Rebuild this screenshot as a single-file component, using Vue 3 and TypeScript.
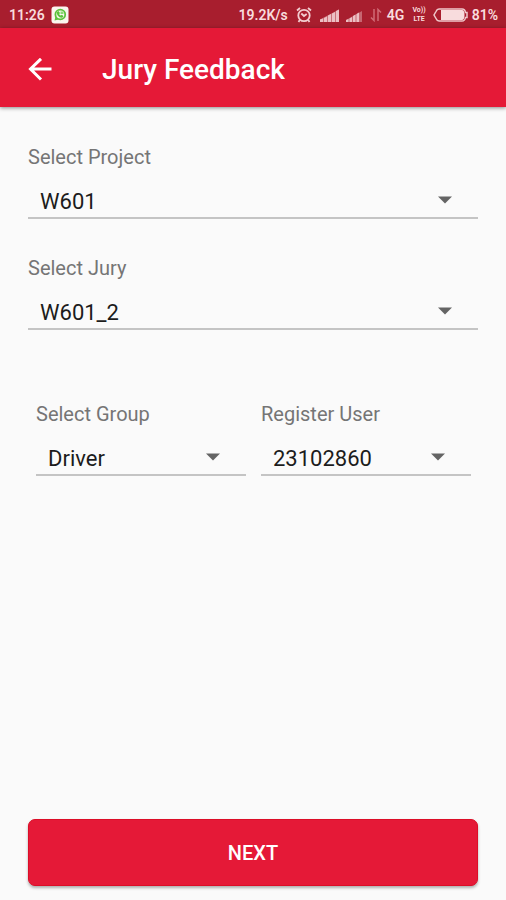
<script setup lang="ts">
import { ref } from 'vue'

interface Field {
  id: string
  label: string
  options: string[]
}

const mainFields: Field[] = [
  { id: 'project', label: 'Select Project', options: ['W601'] },
  { id: 'jury', label: 'Select Jury', options: ['W601_2'] },
]
const userFields: Field[] = [
  { id: 'group', label: 'Select Group', options: ['Driver'] },
  { id: 'user', label: 'Register User', options: ['23102860'] },
]

const values = ref<Record<string, string>>({
  project: 'W601',
  jury: 'W601_2',
  group: 'Driver',
  user: '23102860',
})
</script>

<template>
  <div class="screen">
    <div class="status">
      <span class="clock">11:26</span>
      <svg class="chat" width="18" height="18" viewBox="0 0 18 18" aria-hidden="true">
        <rect x="0.5" y="0.5" width="17" height="17" rx="3" fill="#fbf5ef" />
        <circle cx="9.300" cy="8.500" r="4.900" fill="none" stroke="#5cc23c" stroke-width="1.800" />
        <path d="M3.500 14.500l1-4 3 3z" fill="#5cc23c" />
        <path d="M6 6l1.500-1 1.500 2-.9 1.200 1.500 1.300 1.400-.7 1.500 1.400-1 1.300C8.500 12.500 5.200 9 6 6z" fill="#5cc23c" />
        <path d="M9.500 5.500h3v2.500h-3z" fill="#8ad873" />
      </svg>
      <div class="indicators">
        <span class="rate">19.2K/s</span>
        <svg class="alarm" width="16" height="18" viewBox="0 0 16 18" fill="none" stroke="#f3cdd0" stroke-width="1.800" aria-hidden="true">
          <circle cx="8" cy="9.500" r="5.700" />
          <path d="M1 4.500L4 2M15 4.500L12 2M3.800 14L2.500 16M12.200 14L13.500 16M5.300 7.500L8 10l2.700-2" />
        </svg>
        <svg class="signal" width="19" height="13" viewBox="0 0 19 13" fill="#ecbfc3" aria-hidden="true">
          <path d="M0 13V10.500L19 0.500V13z" opacity="0.500" />
          <path d="M0 13V10.500L3 9.500V13zM4 13V9L7 7.500V13zM8 13V6.500L11 5V13zM12 13V4.500L15 3V13zM16 13V2L19 0.500V13z" />
        </svg>
        <svg class="signal-small" width="16" height="13" viewBox="0 0 16 13" fill="#ecbfc3" aria-hidden="true">
          <path d="M0 13V11L16 2V13z" opacity="0.450" />
          <path d="M0 13V11L2.500 10V13zM3.500 13V9.500L6 8V13zM7 13V7L9.500 5.500V13zM10.500 13V5L13 3.500V13z" />
        </svg>
        <svg class="transfer" width="12" height="14" viewBox="0 0 12 14" fill="none" stroke="#d06b75" stroke-width="1.500" aria-hidden="true">
          <path d="M4 1v11.500L1 9.500M8 13V1.500l3 3" />
        </svg>
        <span class="network">4G</span>
        <span class="volte"><span>Vo))</span><span>LTE</span></span>
        <svg class="battery" width="35" height="14" viewBox="0 0 35 14" aria-hidden="true">
          <path d="M6 1h23q3 0 3.500 3.500h1.500v5h-1.500Q32 13 29 13H6Q4 13 3 10.500L1 7 3 3.500Q4 1 6 1z" fill="none" stroke="#f0c8cb" stroke-width="1.500" />
          <path d="M8 2h21q2.500 0 2.500 5t-2.500 5H8z" fill="#f8dcdd" />
        </svg>
        <span class="percent">81%</span>
      </div>
    </div>

    <header class="toolbar">
      <button class="back" type="button" aria-label="Back">
        <svg width="24" height="24" viewBox="0 0 24 24" fill="none" stroke="#fff" stroke-width="3" aria-hidden="true">
          <path d="M23.500 11H3M13 0.800L2.500 11l10.500 10.500" />
        </svg>
      </button>
      <h1>Jury Feedback</h1>
    </header>

    <form class="form" @submit.prevent>
      <div class="stack">
        <div v-for="f in mainFields" :key="f.id" class="field">
          <label :for="f.id">{{ f.label }}</label>
          <div class="spinner">
            <select :id="f.id" v-model="values[f.id]">
              <option v-for="o in f.options" :key="o">{{ o }}</option>
            </select>
            <svg class="caret" width="14" height="8" viewBox="0 0 14 8" aria-hidden="true">
              <path d="M0 0.500h14L7 7.500z" fill="#646464" />
            </svg>
          </div>
        </div>
      </div>

      <div class="pair">
        <div v-for="f in userFields" :key="f.id" class="field">
          <label :for="f.id">{{ f.label }}</label>
          <div class="spinner">
            <select :id="f.id" v-model="values[f.id]">
              <option v-for="o in f.options" :key="o">{{ o }}</option>
            </select>
            <svg class="caret" width="14" height="8" viewBox="0 0 14 8" aria-hidden="true">
              <path d="M0 0.500h14L7 7.500z" fill="#646464" />
            </svg>
          </div>
        </div>
      </div>

      <button class="next" type="submit">NEXT</button>
    </form>
  </div>
</template>

<style>
body {
  margin: 0;
  background: #fafafa;
}
</style>

<style scoped>
.screen {
  display: flex;
  flex-direction: column;
  min-height: 100vh;
  background: #fafafa;
  font-family: Roboto, "Liberation Sans", sans-serif;
}

.status {
  display: flex;
  align-items: center;
  box-sizing: border-box;
  height: 28px;
  padding: 2px 8px 0 9px;
  background: #a81e2e;
  color: #f8dcdd;
  font-size: 14px;
  font-weight: 600;
  line-height: 16px;
  white-space: nowrap;
}

.chat {
  margin-left: 6px;
}

.indicators {
  display: flex;
  align-items: center;
  margin-left: auto;
}

.alarm {
  margin-left: 8px;
}

.signal {
  margin-left: 8px;
}

.signal-small {
  margin-left: 7px;
}

.transfer {
  margin-left: 8px;
}

.network {
  margin-left: 5px;
}

.volte {
  display: flex;
  flex-direction: column;
  align-items: center;
  margin-left: 8px;
  font-size: 7px;
  font-weight: 700;
  line-height: 9px;
}

.battery {
  margin-left: 7px;
}

.percent {
  margin-left: 4px;
}

.toolbar {
  display: flex;
  align-items: center;
  box-sizing: border-box;
  height: 79px;
  padding: 4px 28px 0;
  background: #e51937;
  box-shadow: 0 1px 4px rgba(0, 0, 0, 0.45);
}

.back {
  display: flex;
  padding: 0;
  border: 0;
  background: none;
}

.toolbar h1 {
  margin: 0 0 0 50px;
  color: #fff;
  font-size: 28px;
  font-weight: 500;
  line-height: 36px;
}

.form {
  display: flex;
  flex: 1;
  flex-direction: column;
  padding: 38px 28px 14px;
}

.stack {
  display: flex;
  flex-direction: column;
  gap: 37px;
}

.pair {
  display: grid;
  grid-template-columns: 1fr 1fr;
  gap: 15px;
  margin: 72px 7px 0 8px;
}

.field {
  display: flex;
  flex-direction: column;
  gap: 14px;
  min-width: 0;
}

.field label {
  color: #757575;
  font-size: 20px;
  line-height: 24px;
}

.spinner {
  display: grid;
  align-items: center;
  border-bottom: 2px solid #c4c4c4;
}

.spinner select,
.caret {
  grid-area: 1 / 1;
}

.spinner select {
  appearance: none;
  width: 100%;
  height: 34px;
  margin: 0;
  padding: 2px 44px 0 12px;
  border: 0;
  border-radius: 0;
  background: transparent;
  color: #1c1c1c;
  font-family: inherit;
  font-size: 22px;
}

.caret {
  justify-self: end;
  margin-right: 26px;
  pointer-events: none;
}

.next {
  height: 67px;
  margin-top: auto;
  border: 1px solid #dc0d27;
  border-radius: 7px;
  background: #e51937;
  box-shadow: 0 2px 3px rgba(0, 0, 0, 0.3);
  color: #fff;
  font-family: inherit;
  font-size: 20px;
  font-weight: 500;
}
</style>
